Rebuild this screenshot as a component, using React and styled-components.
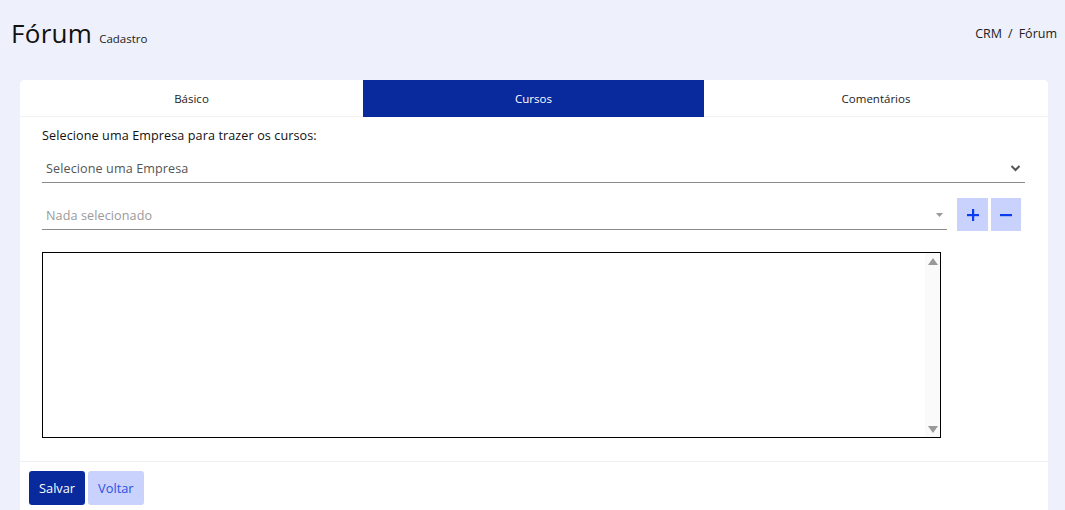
import React from "react";
import styled, { createGlobalStyle } from "styled-components";

const GlobalStyle = createGlobalStyle`
  html, body {
    margin: 0;
    padding: 0;
    background: #eef0fb;
    font-family: "Open Sans", "Liberation Sans", sans-serif;
    color: #1d1d1f;
  }
`;

export const Page = styled.div`
  min-height: 510px;
  display: flex;
  flex-direction: column;
`;

export const Header = styled.header`
  display: flex;
  align-items: center;
  justify-content: space-between;
  height: 62px;
  padding: 4px 8px 0 11px;
  box-sizing: border-box;
`;

export const TitleGroup = styled.div`
  display: flex;
  align-items: baseline;
  gap: 7px;
`;

export const Title = styled.h1`
  margin: 0;
  font-size: 26px;
  font-weight: 400;
  color: #111;
  letter-spacing: 0.3px;
`;

export const Subtitle = styled.span`
  font-size: 11.5px;
  color: #222;
`;

export const Breadcrumb = styled.nav`
  display: flex;
  gap: 6px;
  font-size: 12.5px;
  color: #222;
`;

export const Card = styled.section`
  margin: 18px 17px 0 20px;
  background: #fff;
  border-radius: 5px 5px 0 0;
  flex: 1;
  display: flex;
  flex-direction: column;
`;

export const Tabs = styled.div`
  display: grid;
  grid-template-columns: 343px 341px 1fr;
  height: 37px;
`;

export const Tab = styled.button`
  border: none;
  border-bottom: 1px solid ${(p) => (p.$active ? "#082a9c" : "#f1f1f4")};
  background: ${(p) => (p.$active ? "#082a9c" : "#fff")};
  color: ${(p) => (p.$active ? "#fff" : "#222")};
  font-family: inherit;
  font-size: 11.5px;
  border-radius: ${(p) => p.$radius || "0"};
  cursor: pointer;
`;

export const Body = styled.div`
  padding: 9px 23px 23px 22px;
  display: flex;
  flex-direction: column;
`;

export const Label = styled.div`
  font-size: 12.6px;
  line-height: 19px;
  color: #111;
  letter-spacing: 0.1px;
`;

export const SelectField = styled.div`
  display: flex;
  align-items: center;
  justify-content: space-between;
  height: 32px;
  padding: 3px 4px 0;
  border-bottom: 1px solid #8a8a8a;
  font-size: 12.6px;
  letter-spacing: 0.1px;
  color: ${(p) => (p.$muted ? "#9a9a9a" : "#555")};
  box-sizing: border-box;
  width: ${(p) => p.$width || "auto"};
`;

export const Row = styled.div`
  display: flex;
  align-items: flex-start;
  gap: 10px;
  margin-top: ${(p) => p.$top || "0"};
`;

export const IconGroup = styled.div`
  display: flex;
  gap: 3px;
`;

export const IconButton = styled.button`
  width: ${(p) => p.$w || "31px"};
  height: 33px;
  border: none;
  background: #c9d2fc;
  display: flex;
  align-items: center;
  justify-content: center;
  padding: 0;
  cursor: pointer;
`;

export const ListBox = styled.div`
  margin-top: 21px;
  width: 899px;
  height: 186px;
  border: 1px solid #000;
  box-sizing: border-box;
  display: flex;
  justify-content: flex-end;
`;

export const ScrollTrack = styled.div`
  width: 15px;
  background: #fafafa;
  display: flex;
  flex-direction: column;
  justify-content: space-between;
  align-items: center;
  padding: 5px 0 4px;
`;

export const Footer = styled.div`
  border-top: 1px solid #eef0f4;
  padding: 9px 9px;
  display: flex;
  gap: 3px;
`;

export const Button = styled.button`
  height: 34px;
  padding: 0 10px;
  border: none;
  border-radius: 3px;
  background: ${(p) => (p.$primary ? "#082a9c" : "#c9d2fc")};
  color: ${(p) => (p.$primary ? "#fff" : "#2b4fe6")};
  font-family: inherit;
  font-size: 12.8px;
  font-weight: 500;
  cursor: pointer;
`;

const Chevron = () => (
  <svg width="11" height="8" viewBox="0 0 11 8">
    <polyline points="1.5,2 5.5,6 9.5,2" fill="none" stroke="#555" strokeWidth="2" />
  </svg>
);

const Caret = () => (
  <svg width="7" height="4" viewBox="0 0 7 4">
    <polygon points="0,0 7,0 3.5,4" fill="#999" />
  </svg>
);

const Plus = () => (
  <svg width="12" height="12" viewBox="0 0 12 12">
    <rect x="5" y="0" width="2.2" height="12" fill="#0a3cf0" />
    <rect x="0" y="5" width="12" height="2.2" fill="#0a3cf0" />
  </svg>
);

const Minus = () => (
  <svg width="12" height="12" viewBox="0 0 12 12">
    <rect x="0" y="5" width="12" height="2.2" fill="#0a3cf0" />
  </svg>
);

const Arrow = ({ up }) => (
  <svg width="10" height="7" viewBox="0 0 10 7">
    <polygon points={up ? "0,7 10,7 5,0" : "0,0 10,0 5,7"} fill="#999" />
  </svg>
);

export default function App() {
  return (
    <Page>
      <GlobalStyle />
      <Header>
        <TitleGroup>
          <Title>Fórum</Title>
          <Subtitle>Cadastro</Subtitle>
        </TitleGroup>
        <Breadcrumb>
          <span>CRM</span>
          <span>/</span>
          <span>Fórum</span>
        </Breadcrumb>
      </Header>

      <Card>
        <Tabs>
          <Tab $radius="5px 0 0 0">Básico</Tab>
          <Tab $active>Cursos</Tab>
          <Tab $radius="0 5px 0 0">Comentários</Tab>
        </Tabs>

        <Body>
          <Label>Selecione uma Empresa para trazer os cursos:</Label>
          <Row $top="6px">
            <SelectField $width="983px">
              <span>Selecione uma Empresa</span>
              <Chevron />
            </SelectField>
          </Row>
          <Row $top="15px">
            <SelectField $muted $width="905px">
              <span>Nada selecionado</span>
              <Caret />
            </SelectField>
            <IconGroup>
              <IconButton>
                <Plus />
              </IconButton>
              <IconButton $w="30px">
                <Minus />
              </IconButton>
            </IconGroup>
          </Row>
          <ListBox>
            <ScrollTrack>
              <Arrow up />
              <Arrow />
            </ScrollTrack>
          </ListBox>
        </Body>

        <Footer>
          <Button $primary>Salvar</Button>
          <Button>Voltar</Button>
        </Footer>
      </Card>
    </Page>
  );
}
